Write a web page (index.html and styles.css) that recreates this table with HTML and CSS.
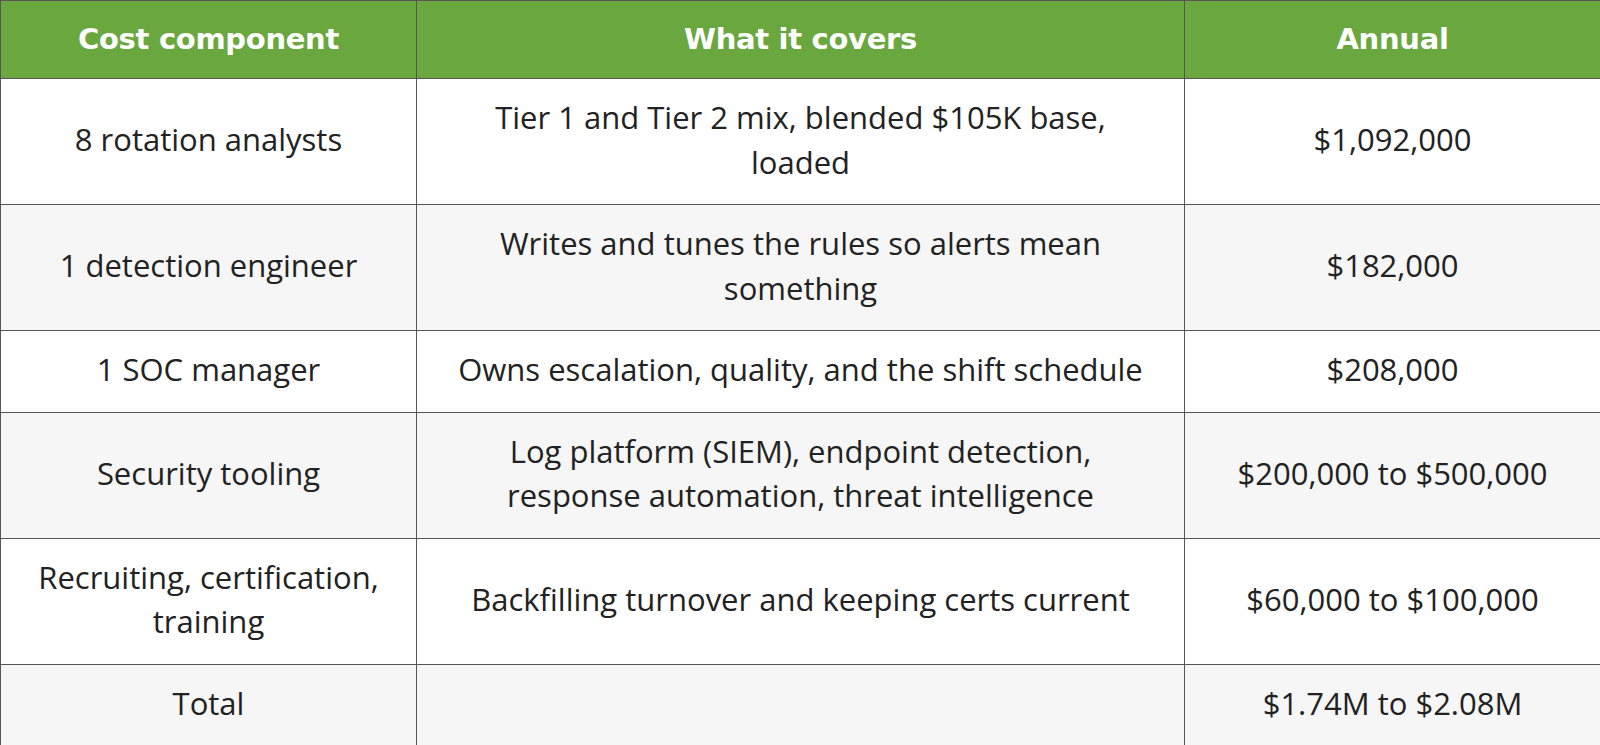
FILE: index.html
```html
<!DOCTYPE html>
<html lang="en">
<head>
<meta charset="utf-8">
<title>SOC cost breakdown</title>
<link rel="stylesheet" href="styles.css">
</head>
<body>
<table class="cost-table">
  <colgroup>
    <col class="col-side">
    <col class="col-mid">
    <col class="col-side">
  </colgroup>
  <thead>
    <tr>
      <th>Cost component</th>
      <th>What it covers</th>
      <th>Annual</th>
    </tr>
  </thead>
  <tbody>
    <tr>
      <td>8 rotation analysts</td>
      <td>Tier 1 and Tier 2 mix, blended $105K base, loaded</td>
      <td>$1,092,000</td>
    </tr>
    <tr>
      <td>1 detection engineer</td>
      <td>Writes and tunes the rules so alerts mean something</td>
      <td>$182,000</td>
    </tr>
    <tr>
      <td>1 SOC manager</td>
      <td>Owns escalation, quality, and the shift schedule</td>
      <td>$208,000</td>
    </tr>
    <tr>
      <td>Security tooling</td>
      <td>Log platform (SIEM), endpoint detection, response automation, threat intelligence</td>
      <td>$200,000 to $500,000</td>
    </tr>
    <tr>
      <td>Recruiting, certification, training</td>
      <td>Backfilling turnover and keeping certs current</td>
      <td>$60,000 to $100,000</td>
    </tr>
    <tr>
      <td>Total</td>
      <td></td>
      <td>$1.74M to $2.08M</td>
    </tr>
  </tbody>
</table>
</body>
</html>
```
FILE: styles.css
```css
html, body {
  margin: 0;
  padding: 0;
  background: #ffffff;
}

.cost-table {
  width: 1600px;
  border-collapse: collapse;
  table-layout: fixed;
  font-family: "Open Sans", "Noto Sans", sans-serif;
  font-size: 31px;
  color: #222222;
  border-bottom: 2px solid #4e4e4e;
}

.col-side { width: 416px; }
.col-mid { width: 768px; }

.cost-table th,
.cost-table td {
  border: 1px solid #555555;
  text-align: center;
  vertical-align: middle;
}

.cost-table th {
  background: #6aa83f;
  color: #ffffff;
  font-family: "DejaVu Sans", "Open Sans", sans-serif;
  font-weight: 700;
  font-size: 29px;
  line-height: 46px;
  padding: 15px 20px 16px;
  letter-spacing: -0.3px;
}

.cost-table td {
  line-height: 44.5px;
  padding: 16px 36px 20px;
}

.cost-table tbody tr:nth-child(even) td {
  background: #f6f6f6;
}

.cost-table tbody tr:nth-child(odd) td {
  background: #ffffff;
}
```
